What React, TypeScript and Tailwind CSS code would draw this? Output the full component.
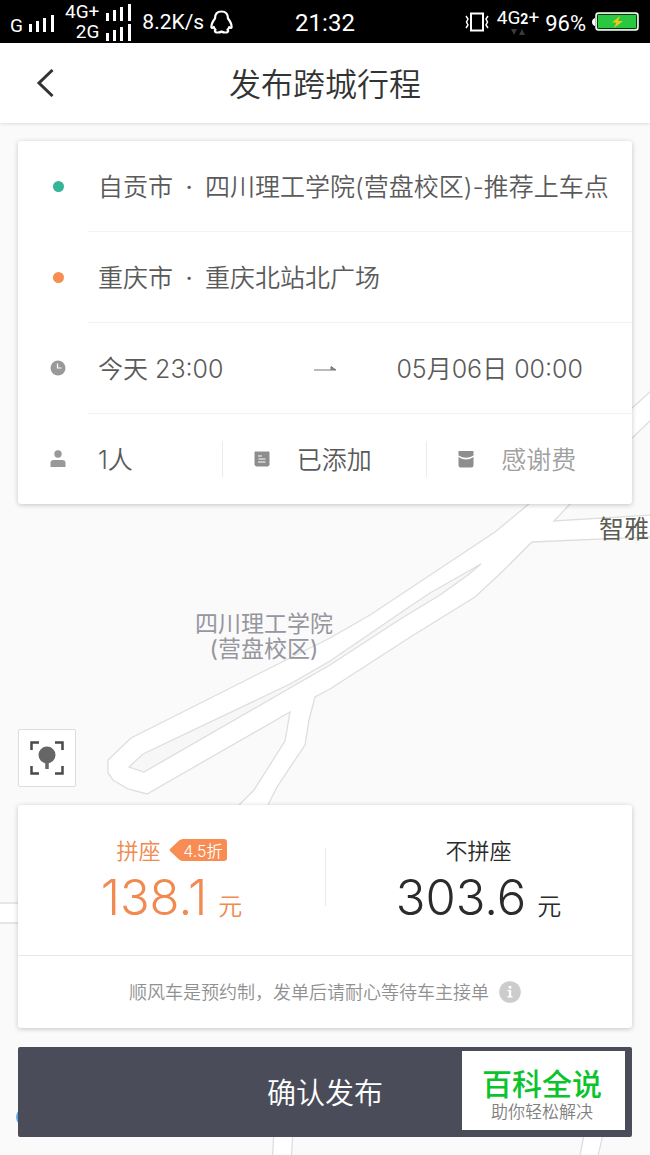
import { useState } from "react";
import type { ReactNode } from "react";

function SignalBars() {
  return (
    <svg width="25" height="17" viewBox="0 0 25 17" fill="currentColor" aria-hidden="true">
      <rect x="0" y="9" width="3" height="8" />
      <rect x="7" y="6" width="3" height="11" />
      <rect x="14" y="3" width="3" height="14" />
      <rect x="22" y="0" width="3" height="17" />
    </svg>
  );
}

function StatusBar() {
  return (
    <div className="grid h-[43px] grid-cols-[1fr_auto_1fr] items-center bg-black font-['Roboto',sans-serif] text-white">
      <div className="flex h-full items-center pl-[10px]">
        <span className="pt-[7px] text-[19px] leading-none">G</span>
        <span className="ml-[6px] pt-1"><SignalBars /></span>
        <div className="ml-[11px] flex flex-col items-end pt-px">
          <div className="flex h-5 items-center gap-[7px] text-[19px] leading-5">
            4G+
            <SignalBars />
          </div>
          <div className="flex h-5 items-center gap-[7px] text-[19px] leading-5">
            2G
            <SignalBars />
          </div>
        </div>
        <span className="ml-[11px] pt-[3px] text-[21px]">8.2K/s</span>
        <svg className="ml-[6px]" width="23" height="24" viewBox="0 0 23 24" fill="none" stroke="currentColor" strokeWidth="2.2" strokeLinejoin="round" aria-hidden="true">
          <path d="M11.5 1.5C7 1.5 5 4.5 5 8.500C3 11 1 14.500 1.500 17.500C2 18.500 3.200 17.500 3.800 17C4 18.200 4.800 19 5.500 19.800C4.500 20.500 4.500 22 6 22.300C8 22.700 10.500 22.200 11.500 21.500C12.500 22.200 15 22.700 17 22.300C18.500 22 18.500 20.500 17.500 19.800C18.200 19 19 18.200 19.200 17C19.800 17.500 21 18.500 21.500 17.500C22 14.500 20 11 18 8.500C18 4.500 16 1.500 11.500 1.500Z" />
        </svg>
      </div>
      <time className="pt-[3px] text-[24px]">21:32</time>
      <div className="flex h-full items-center justify-end pr-[11px]">
        <svg width="24" height="20" viewBox="0 0 24 20" fill="none" stroke="currentColor" strokeWidth="2" aria-hidden="true">
          <rect x="6" y="1.500" width="12" height="17" />
          <path d="M1 4L3 7L1.500 10L3 13L1 16M23 4L21 7L22.500 10L21 13L23 16" strokeWidth="1.500" />
        </svg>
        <div className="ml-[8px] flex flex-col items-center">
          <span className="text-[19px] leading-5">4G<b className="text-[14px]">2</b>+</span>
          <svg width="14" height="6" viewBox="0 0 14 6" fill="#3a3a3a" aria-hidden="true">
            <path d="M0 0H6L3 6ZM8 6H14L11 0Z" />
          </svg>
        </div>
        <span className="ml-[6px] pt-[3px] text-[22px]">96%</span>
        <svg className="ml-[6px]" width="47" height="20" viewBox="0 0 47 20" aria-hidden="true">
          <path d="M3 6Q0 7 0 10Q0 13 3 14Z" fill="#fff" />
          <rect x="4" y="1" width="42" height="17" rx="2.500" fill="#2ac840" stroke="#fff" strokeWidth="1.500" />
          <rect x="5.500" y="2.500" width="39" height="14" rx="1" fill="none" stroke="#0b3010" strokeWidth="1" />
          <path d="M28 4L20 10.500H24.500L22 16L31 9H26Z" fill="#f5c518" />
        </svg>
      </div>
    </div>
  );
}

function MapLayer() {
  return (
    <div className="absolute inset-0 overflow-hidden bg-[#fafafa]">
      <svg
        className="h-full w-full"
        viewBox="0 123 650 1032"
        preserveAspectRatio="xMidYMin slice"
        fill="#fff"
        stroke="#dedede"
        strokeWidth="1.300"
        aria-hidden="true"
      >
        <path d="M670 374L631 409L530 503L495 532L370 615L330 638L290 658L131 738L108 760V773L113 780L128 789L147 794L290 712L285 741L254 790L220 824L250 830L268 805L277 787L305 745L309 720L315 697L330 689L412 636L475 597L504 570L532 542L670 536V514L554 521L571 503L631 439L670 402Z" />
        <path d="M129 767L143 754L290 684L330 661L412 605L430 593L481 564L468 575L440 595L402 618L330 665L290 688L144 772Z" fill="#f7f7f7" />
        <path d="M-5 903H40V923H-5Z" />
        <path d="M274 1130L272 1165H291L293 1130ZM585 1130L578 1165H596L604 1130Z" />
        <circle cx="26" cy="1117" r="10" fill="#5da9e9" stroke="none" />
      </svg>
      <p className="absolute top-[489px] left-[195px] text-center text-[23px] leading-[25px] text-[#96969f]">
        四川理工学院
        <br />
        (营盘校区)
      </p>
      <p className="absolute top-[388px] left-[599px] text-[25px] whitespace-nowrap text-[#5c5c54]">智雅</p>
    </div>
  );
}

function Row({ icon, children }: { icon: ReactNode; children: ReactNode }) {
  return (
    <div className="flex h-[90px] items-center">
      <span className="flex w-[80px] shrink-0 justify-center">{icon}</span>
      {children}
    </div>
  );
}

function Place({ color, city, name }: { color: string; city: string; name: string }) {
  return (
    <Row icon={<span className={`size-[11px] rounded-full ${color}`} />}>
      <button type="button" className="flex items-center pt-1 whitespace-nowrap">
        {city}
        <span className="w-[32px] text-center font-normal">·</span>
        {name}
      </button>
    </Row>
  );
}

const ClockIcon = () => (
  <svg width="16" height="16" viewBox="0 0 16 16" aria-hidden="true">
    <circle cx="8" cy="8" r="7.500" fill="#999" />
    <path d="M7.500 3.500V8H11.500" stroke="#fff" strokeWidth="1.200" fill="none" />
  </svg>
);

const PersonIcon = () => (
  <svg width="16" height="18" viewBox="0 0 16 18" fill="#999" aria-hidden="true">
    <circle cx="8" cy="4" r="3.700" />
    <path d="M0.500 17V13Q0.500 10 3.500 10H12.500Q15.500 10 15.500 13V17Z" />
  </svg>
);

const NoteIcon = () => (
  <svg width="16" height="16" viewBox="0 0 16 16" aria-hidden="true">
    <path d="M1 1H15V14L14 15H2L1 14Z" fill="#8e8e8e" stroke="#8e8e8e" strokeLinejoin="round" />
    <path d="M4 5H8M4.500 8H11.500M4 11H11.500" stroke="#fff" strokeWidth="1.200" />
  </svg>
);

const PacketIcon = () => (
  <svg width="16" height="18" viewBox="0 0 16 18" fill="#8e8e8e" aria-hidden="true">
    <path d="M0.500 1H15.500V5.500Q8 10 0.500 5.500Z" />
    <path d="M0.500 7Q8 12 15.500 7V15Q15.500 17.500 13 17.500H3Q0.500 17.500 0.500 15Z" />
  </svg>
);

function TripCard() {
  return (
    <section className="rounded-[3px] bg-white text-[25px] font-[350] text-[#5a5a5a] shadow-[0_1px_5px_rgba(0,0,0,0.22)]">
      <Place color="bg-[#35b597]" city="自贡市" name="四川理工学院(营盘校区)-推荐上车点" />
      <hr className="ml-[70px] border-[#f3f3f3]" />
      <Place color="bg-[#f78d52]" city="重庆市" name="重庆北站北广场" />
      <hr className="ml-[70px] border-[#f3f3f3]" />
      <Row icon={<ClockIcon />}>
        <button type="button" className="flex flex-1 items-center justify-between pt-1 pr-[49px]">
          <span>今天 23:00</span>
          <svg className="ml-[32px]" width="23" height="8" viewBox="0 0 23 8" aria-hidden="true">
            <path d="M0 4H22L17 0.500V4" fill="#888" stroke="#777" strokeWidth="1" />
          </svg>
          <span>05月06日 00:00</span>
        </button>
      </Row>
      <hr className="ml-[70px] border-[#f3f3f3]" />
      <div className="grid h-[90px] grid-cols-3 items-center divide-x divide-[#ececec]">
        <button type="button" className="flex h-[36px] items-center">
          <span className="flex w-[80px] justify-center"><PersonIcon /></span>
          <span className="pt-1">1人</span>
        </button>
        <button type="button" className="flex h-[36px] items-center gap-[27px] pl-[31px]">
          <NoteIcon />
          <span className="pt-1">已添加</span>
        </button>
        <button type="button" className="flex h-[36px] items-center gap-[27px] pl-[31px] text-[#a0a0a0]">
          <PacketIcon />
          <span className="pt-1">感谢费</span>
        </button>
      </div>
    </section>
  );
}

function PriceCard() {
  const [shared, setShared] = useState(true);

  return (
    <section className="rounded-[3px] bg-white font-[350] shadow-[0_1px_5px_rgba(0,0,0,0.22)]">
      <div className="relative grid h-[150px] grid-cols-2">
        <button
          type="button"
          onClick={() => setShared(true)}
          className={`flex flex-col items-center pt-[30px] ${shared ? "text-[#f08a50]" : "text-[#2b2b2b]"}`}
        >
          <span className="flex h-[30px] items-center gap-2 text-[22px]">
            <span className="pt-[2px]">拼座</span>
            <span className="relative flex h-[22px] w-[58px] items-center justify-end pt-[2px] pr-1 text-[16px] text-white">
              <svg className="absolute inset-0" width="58" height="22" viewBox="0 0 58 22" fill="#f78d52" aria-hidden="true">
                <path d="M1 10L10 1.500Q12 0 14 0H55Q58 0 58 3V19Q58 22 55 22H14Q12 22 10 20.500L1 12Q0 11 1 10Z" />
              </svg>
              <span className="relative">4.5折</span>
            </span>
          </span>
          <span className="flex items-baseline gap-[11px] text-[49px] leading-[66px] font-light">
            138.1<span className="text-[24px] font-[350]">元</span>
          </span>
        </button>
        <button
          type="button"
          onClick={() => setShared(false)}
          className={`flex flex-col items-center pt-[30px] ${shared ? "text-[#2b2b2b]" : "text-[#f08a50]"}`}
        >
          <span className="flex h-[30px] items-center text-[22px]">
            <span className="pt-[2px]">不拼座</span>
          </span>
          <span className="flex items-baseline gap-[11px] text-[49px] leading-[66px] font-light">
            303.6<span className="text-[24px] font-[350]">元</span>
          </span>
        </button>
        <span className="absolute top-[43px] left-1/2 h-[58px] w-px bg-[#ececec]" />
      </div>
      <p className="flex h-[73px] items-center justify-center gap-[10px] border-t border-[#e8e8e8] text-[18px] text-[#909090]">
        顺风车是预约制，发单后请耐心等待车主接单
        <svg width="22" height="22" viewBox="0 0 22 22" fill="#fff" aria-hidden="true">
          <circle cx="11" cy="11" r="10.800" fill="#ccc" />
          <rect x="9.700" y="5" width="2.600" height="2.600" />
          <path d="M8.500 9H12.200V15H13.500V16.500H8.500V15H9.900V10.300H8.500Z" />
        </svg>
      </p>
    </section>
  );
}

export default function App() {
  return (
    <div className="flex min-h-screen flex-col bg-[#fafafa] font-['Inter','Noto_Sans_CJK_SC',sans-serif]">
      <StatusBar />
      <header className="relative z-10 flex h-[80px] items-center justify-center bg-white shadow-[0_1px_3px_rgba(0,0,0,0.12)]">
        <button type="button" aria-label="返回" className="absolute left-[36px]">
          <svg width="18" height="28" viewBox="0 0 18 28" fill="none" stroke="#333" strokeWidth="3" aria-hidden="true">
            <path d="M16.500 1L3 14L16.500 27" />
          </svg>
        </button>
        <h1 className="pt-1 text-[32px] font-[350] text-[#333]">发布跨城行程</h1>
      </header>
      <main className="relative flex flex-1 flex-col">
        <MapLayer />
        <div className="relative flex flex-1 flex-col p-[18px]">
          <TripCard />
          <button
            type="button"
            aria-label="定位"
            className="mt-auto flex size-[58px] items-center justify-center rounded-[2px] border border-[#dcdcdc] bg-white"
          >
            <svg width="34" height="34" viewBox="0 0 34 34" fill="none" stroke="#4a4a4a" strokeWidth="2.500" aria-hidden="true">
              <path d="M1.500 9V1.500H9M25 1.500H32.500V9M32.500 25V32.500H25M9 32.500H1.500V25" />
              <circle cx="17" cy="14" r="8.500" fill="#666" stroke="none" />
              <path d="M17 20V28" stroke="#666" strokeWidth="3.500" />
            </svg>
          </button>
          <div className="mt-[18px]">
            <PriceCard />
          </div>
          <div className="relative mt-[19px]">
            <button type="button" className="h-[90px] w-full rounded-[2px] bg-[#4a4d59] pt-1 text-[29px] font-[350] text-white">
              确认发布
            </button>
            <div className="absolute top-[4px] right-[7px] flex h-[79px] w-[163px] flex-col items-center justify-center bg-white pt-2 pr-[3px]">
              <strong className="text-[30px] leading-[34px] font-medium text-[#0bc42d]">百科全说</strong>
              <span className="text-[17px] leading-[22px] font-[350] text-[#808080]">助你轻松解决</span>
            </div>
          </div>
        </div>
      </main>
    </div>
  );
}
